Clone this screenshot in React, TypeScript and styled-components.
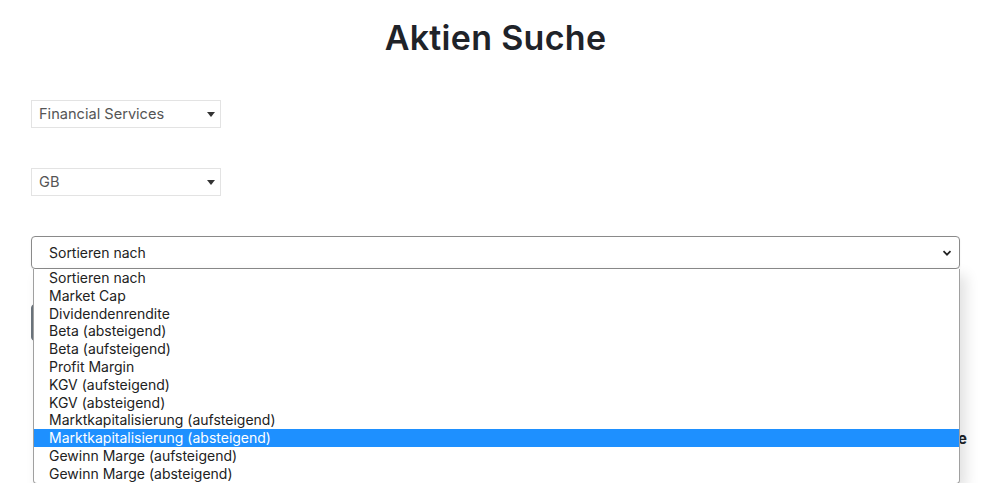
import { useState } from "react";
import styled, { createGlobalStyle } from "styled-components";

const GlobalStyle = createGlobalStyle`
  html, body {
    margin: 0;
    padding: 0;
    background: #fff;
    overflow: hidden;
  }
  body {
    font-family: "Inter", "Open Sans", sans-serif;
    color: #212529;
  }
`;

const sectors = ["Financial Services", "Technology", "Healthcare", "Energy"];
const countries = ["GB", "US", "DE", "FR"];
const sortOptions = [
  "Sortieren nach",
  "Market Cap",
  "Dividendenrendite",
  "Beta (absteigend)",
  "Beta (aufsteigend)",
  "Profit Margin",
  "KGV (aufsteigend)",
  "KGV (absteigend)",
  "Marktkapitalisierung (aufsteigend)",
  "Marktkapitalisierung (absteigend)",
  "Gewinn Marge (aufsteigend)",
  "Gewinn Marge (absteigend)",
];

const Page = styled.div`
  padding: 0 40px 0 31px;
  height: 483px;
  box-sizing: border-box;
`;

const Title = styled.h1`
  margin: 18px 0 0;
  font-size: 34px;
  line-height: 40px;
  font-weight: 600;
  text-align: center;
  letter-spacing: 0.3px;
  color: #1f2329;
`;

const Filters = styled.div`
  display: flex;
  flex-direction: column;
  gap: 40px;
  margin-top: 42px;
`;

const SmallSelect = styled.div`
  width: 190px;
  height: 28px;
  box-sizing: border-box;
  border: 1px solid #e3e3e3;
  display: flex;
  align-items: center;
  justify-content: space-between;
  padding: 0 5px 0 7px;
  font-size: 14.6px;
  color: #555;
`;

const Caret = styled.span`
  width: 0;
  height: 0;
  border-left: 4.5px solid transparent;
  border-right: 4.5px solid transparent;
  border-top: 5px solid #333;
`;

const SortWrap = styled.div`
  position: relative;
`;

const SortSelect = styled.div`
  height: 33px;
  box-sizing: border-box;
  border: 1px solid #8a8a8a;
  border-radius: 4px;
  display: flex;
  align-items: center;
  justify-content: space-between;
  padding: 0 7px 0 17px;
  font-size: 14px;
  color: #222;
  box-shadow: 0 1px 2px rgba(0, 0, 0, 0.08);
`;

const Dropdown = styled.ul`
  position: absolute;
  top: 100%;
  left: 2px;
  right: 0;
  margin: 0;
  padding: 0;
  list-style: none;
  background: #fff;
  border: 1px solid #a0a0a0;
  border-top: none;
  border-radius: 0 0 4px 4px;
  box-shadow: 6px 6px 14px rgba(0, 0, 0, 0.12);
  z-index: 10;
`;

const Option = styled.li<{ $active: boolean }>`
  height: 17.8px;
  line-height: 17.8px;
  padding-left: 15px;
  font-size: 14px;
  color: ${p => (p.$active ? "#fff" : "#222")};
  background: ${p => (p.$active ? "#1e90ff" : "transparent")};
  white-space: nowrap;
`;

const SearchButton = styled.button`
  display: block;
  margin-top: 35px;
  width: 160px;
  height: 37px;
  border: 1px solid #6c757d;
  border-radius: 4px;
  background: #6c757d;
`;

const ResultHead = styled.div`
  margin: 88px -7px 0 0;
  text-align: right;
  font-size: 15px;
  font-weight: 700;
  color: #212529;
`;

const Chevron = () => (
  <svg width="10" height="10" viewBox="0 0 10 10">
    <path d="M1.5 3.2 5 6.7 8.5 3.2" fill="none" stroke="#222" strokeWidth="1.7" />
  </svg>
);

const App = () => {
  const [active, setActive] = useState(9);

  return (
    <>
      <GlobalStyle />
      <Page>
        <Title>Aktien Suche</Title>
        <Filters>
          <SmallSelect>
            {sectors[0]}
            <Caret />
          </SmallSelect>
          <SmallSelect>
            {countries[0]}
            <Caret />
          </SmallSelect>
          <SortWrap>
            <SortSelect>
              Sortieren nach
              <Chevron />
            </SortSelect>
            <Dropdown>
              {sortOptions.map((o, i) => (
                <Option key={o} $active={i === active} onMouseEnter={() => setActive(i)}>
                  {o}
                </Option>
              ))}
            </Dropdown>
          </SortWrap>
        </Filters>
        <SearchButton aria-label="Suchen" />
        <ResultHead>Gewinnmarge</ResultHead>
      </Page>
    </>
  );
};

export default App;
